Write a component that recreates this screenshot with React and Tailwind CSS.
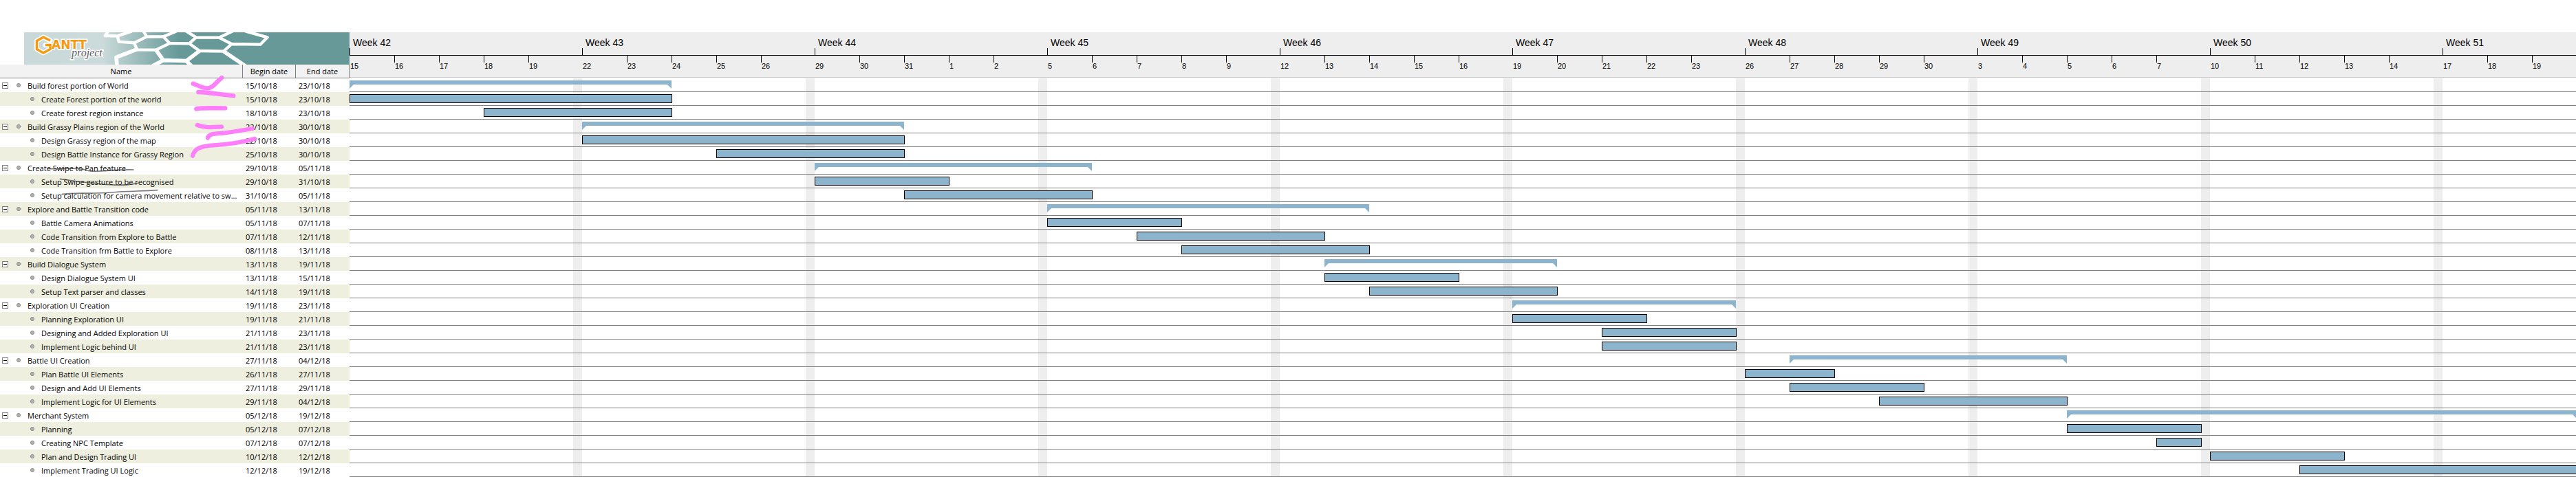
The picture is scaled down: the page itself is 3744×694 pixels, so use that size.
import React from "react";

const FIRST_DAY = Date.UTC(2018, 9, 15);
const LAST_DAY = Date.UTC(2018, 11, 19);
const DAY_MS = 86400000;

const groups = [
  ["Build forest portion of World", "15/10/18", "23/10/18", [
    ["Create Forest portion of the world", "15/10/18", "23/10/18"],
    ["Create forest region instance", "18/10/18", "23/10/18"],
  ]],
  ["Build Grassy Plains region of the World", "22/10/18", "30/10/18", [
    ["Design Grassy region of the map", "22/10/18", "30/10/18"],
    ["Design Battle Instance for Grassy Region", "25/10/18", "30/10/18"],
  ]],
  ["Create Swipe to Pan feature", "29/10/18", "05/11/18", [
    ["Setup Swipe gesture to be recognised", "29/10/18", "31/10/18"],
    ["Setup calculation for camera movement relative to sw...", "31/10/18", "05/11/18"],
  ]],
  ["Explore and Battle Transition code", "05/11/18", "13/11/18", [
    ["Battle Camera Animations", "05/11/18", "07/11/18"],
    ["Code Transition from Explore to Battle", "07/11/18", "12/11/18"],
    ["Code Transition frm Battle to Explore", "08/11/18", "13/11/18"],
  ]],
  ["Build Dialogue System", "13/11/18", "19/11/18", [
    ["Design Dialogue System UI", "13/11/18", "15/11/18"],
    ["Setup Text parser and classes", "14/11/18", "19/11/18"],
  ]],
  ["Exploration UI Creation", "19/11/18", "23/11/18", [
    ["Planning Exploration UI", "19/11/18", "21/11/18"],
    ["Designing and Added Exploration UI", "21/11/18", "23/11/18"],
    ["Implement Logic behind UI", "21/11/18", "23/11/18"],
  ]],
  ["Battle UI Creation", "27/11/18", "04/12/18", [
    ["Plan Battle UI Elements", "26/11/18", "27/11/18"],
    ["Design and Add UI Elements", "27/11/18", "29/11/18"],
    ["Implement Logic for UI Elements", "29/11/18", "04/12/18"],
  ]],
  ["Merchant System", "05/12/18", "19/12/18", [
    ["Planning", "05/12/18", "07/12/18"],
    ["Creating NPC Template", "07/12/18", "07/12/18"],
    ["Plan and Design Trading UI", "10/12/18", "12/12/18"],
    ["Implement Trading UI Logic", "12/12/18", "19/12/18"],
  ]],
];

const rows = groups.flatMap(([name, begin, end, tasks]) => [
  { name, begin, end, summary: true },
  ...tasks.map(([n, b, e]) => ({ name: n, begin: b, end: e, summary: false })),
]);

const weeks = [42, 43, 44, 45, 46, 47, 48, 49, 50, 51];

// Each week takes six grid columns: five working days and one narrow weekend.
function columnOf(text) {
  const [d, m, y] = text.split("/").map(Number);
  const days = Math.round((Date.UTC(2000 + y, m - 1, d) - FIRST_DAY) / DAY_MS);
  return Math.floor(days / 7) * 6 + Math.min(days % 7, 5) + 1;
}

// The working days of a week, up to the end of the project.
function workingDays(week) {
  return [0, 1, 2, 3, 4]
    .map((day) => FIRST_DAY + (week * 7 + day) * DAY_MS)
    .filter((time) => time <= LAST_DAY)
    .map((time) => new Date(time).getUTCDate());
}

function Banner() {
  return (
    <div className="ml-[35px] h-[47px] bg-[linear-gradient(to_right,#c9d8d8_0,#cbdada_115px,#679999_225px)]">
      <svg viewBox="0 0 473 47" className="block h-full w-full" role="img" aria-label="GanttProject">
        <g transform="scale(.33333) translate(-105 -51)" fill="none" stroke="#fff" strokeWidth="13" strokeLinejoin="round">
          <path d="M472 46 458 66 512 67 575 46M512 67 518 92 585 97 640 70 625 46M640 70 712 70 770 46M585 97 598 127 680 128 740 99 712 70M740 99 825 100 855 73 812 46M855 73 955 74 1015 46M955 74 1010 102 1135 104 1166 73 1070 46M825 100 870 132 975 134 1010 102" />
          <path strokeWidth="17" d="M598 125 507 160 510 196M680 128 712 173 812 176 870 132M712 173 665 198M812 176 835 198M975 134 1070 198" />
        </g>
        <path d="M38 12 28 7 18.500 12.500V24.500L28 30 38 24.500V18.500H31" fill="none" stroke="#fff" strokeWidth="7" strokeLinecap="round" strokeLinejoin="round" />
        <text x="40" y="24" fontFamily="DejaVu Sans" fontWeight="700" fontSize="17" fill="#f7990f" stroke="#fff" strokeWidth="3" paintOrder="stroke">ANTT</text>
        <path d="M38 12 28 7 18.500 12.500V24.500L28 30 38 24.500V18.500H31" fill="none" stroke="#f7990f" strokeWidth="3.500" />
        <text x="69" y="35" fontFamily="Liberation Serif" fontStyle="italic" fontSize="16" fill="#5c5c64" stroke="#fff" strokeWidth="3" paintOrder="stroke">project</text>
      </svg>
    </div>
  );
}

function Bullet() {
  return (
    <svg viewBox="0 0 6 6" className="size-[6px] shrink-0" aria-hidden="true">
      <circle cx="3" cy="3" r="2.500" fill="#b4b4b4" stroke="#858585" />
    </svg>
  );
}

function TaskTable() {
  return (
    <table className="w-full table-fixed border-collapse text-left font-['Open_Sans',sans-serif] text-[11px] leading-[19px] text-black">
      <colgroup>
        <col />
        <col className="w-[77px]" />
        <col className="w-[78px]" />
      </colgroup>
      <thead>
        <tr className="h-5 bg-[#f2f2f2]">
          {["Name", "Begin date", "End date"].map((title) => (
            <th key={title} scope="col" className="p-0 text-center font-normal whitespace-nowrap">
              <div className="h-5 border-r border-b border-[#808080]">{title}</div>
            </th>
          ))}
        </tr>
      </thead>
      <tbody>
        {rows.map((row) => (
          <tr key={row.name} className="h-5 even:bg-[#eeefdf]">
            <td className="p-0">
              <div className={row.summary ? "flex h-5 items-center pl-[3px]" : "flex h-5 items-center pl-11"}>
                {row.summary && (
                  <button type="button" aria-label={"Collapse " + row.name} className="mr-3 flex size-[9px] shrink-0 items-center justify-center border border-[#808080] bg-white">
                    <span className="h-px w-[5px] bg-black" />
                  </button>
                )}
                <Bullet />
                <span className="pl-[10px] whitespace-nowrap">{row.name}</span>
              </div>
            </td>
            <td className="py-0 pr-0 pl-1 whitespace-nowrap">{row.begin}</td>
            <td className="py-0 pr-0 pl-1 whitespace-nowrap">{row.end}</td>
          </tr>
        ))}
      </tbody>
    </table>
  );
}

function PenMarks() {
  return (
    <svg viewBox="0 0 1524 600" className="pointer-events-none absolute top-[94px] left-0 h-[200px] w-[508px]" aria-hidden="true">
      <g transform="translate(0 -192)" fill="none" strokeLinecap="round" strokeLinejoin="round">
        <g stroke="#fd80fa" strokeWidth="19">
          <path d="M842 275C870 285 885 297 905 295 930 295 940 270 967 249" />
          <path d="M865 312C920 314 960 322 1018 328" />
          <path d="M856 385C870 380 900 382 982 382" />
          <path d="M861 456C900 470 930 465 966 463" />
          <path d="M906 512C912 490 945 495 980 490 1020 485 1050 480 1100 471" />
          <path d="M840 590C848 560 870 548 930 544 1000 540 1060 530 1110 516" />
        </g>
        <g stroke="#333" strokeOpacity=".65" strokeWidth="5">
          <path d="M208 646C280 650 340 638 385 655 430 665 480 648 582 651" />
          <path d="M262 691C330 700 400 712 480 716 520 720 560 718 600 710" />
          <path d="M270 758C320 748 400 758 480 750 560 743 620 745 686 740" />
        </g>
      </g>
    </svg>
  );
}

function Timeline() {
  return (
    <div className="flex h-[66px] flex-col border-b border-[#c8c8c8] bg-[#eeeeee] font-['Liberation_Sans',Arial,sans-serif] text-black">
      <div className="flex border-b border-black">
        {weeks.map((week) => (
          <div key={week} className="flex h-[33px] w-[338px] shrink-0 items-end">
            <span className="h-[10px] w-px bg-black" />
            <span className="pb-2 pl-1 text-[14px] leading-5">Week {week}</span>
          </div>
        ))}
      </div>
      <div className="flex">
        {weeks.map((week, w) => (
          <div key={week} className="flex w-[338px] shrink-0">
            {workingDays(w).map((label, day) => (
              <div key={label} className="flex w-[65px] flex-col">
                <span className={day ? "h-[10px] w-px bg-black" : "h-[10px] w-px"} />
                <span className="pl-px text-[11px] leading-[11px]">{label}</span>
              </div>
            ))}
          </div>
        ))}
      </div>
    </div>
  );
}

function SummaryBar({ span }) {
  return (
    <div className="mt-[3px] h-3" style={span}>
      <div className="h-[6px] bg-[#8cb4cd]" />
      <div className="flex justify-between">
        <svg viewBox="0 0 6 6" className="size-[6px]" aria-hidden="true"><path d="M0 0H6L0 6Z" fill="#8cb4cd" /></svg>
        <svg viewBox="0 0 6 6" className="size-[6px]" aria-hidden="true"><path d="M0 0H6V6Z" fill="#8cb4cd" /></svg>
      </div>
    </div>
  );
}

function Chart() {
  return (
    <div className="mt-px bg-[repeating-linear-gradient(to_right,transparent_0_325px,#eeeeee_325px_338px)]">
      {rows.map((row) => {
        const span = { gridColumn: columnOf(row.begin) + " / " + (columnOf(row.end) + 1), gridRow: 1 };
        return (
          <div key={row.name} className="grid h-5 grid-cols-[repeat(10,65px_65px_65px_65px_65px_13px)] items-start border-b border-[#808080]">
            {row.summary
              ? <SummaryBar span={span} />
              : <div className="mt-[3px] -mr-px h-[13px] border border-black bg-[#8cb4cd]" style={span} />}
          </div>
        );
      })}
    </div>
  );
}

export default function App() {
  return (
    <main className="flex bg-white pt-[47px]">
      <section className="w-[508px] shrink-0" aria-label="Tasks">
        <Banner />
        <TaskTable />
        <PenMarks />
      </section>
      <section className="min-w-0 flex-1 overflow-hidden" aria-label="Schedule">
        <Timeline />
        <Chart />
      </section>
    </main>
  );
}
